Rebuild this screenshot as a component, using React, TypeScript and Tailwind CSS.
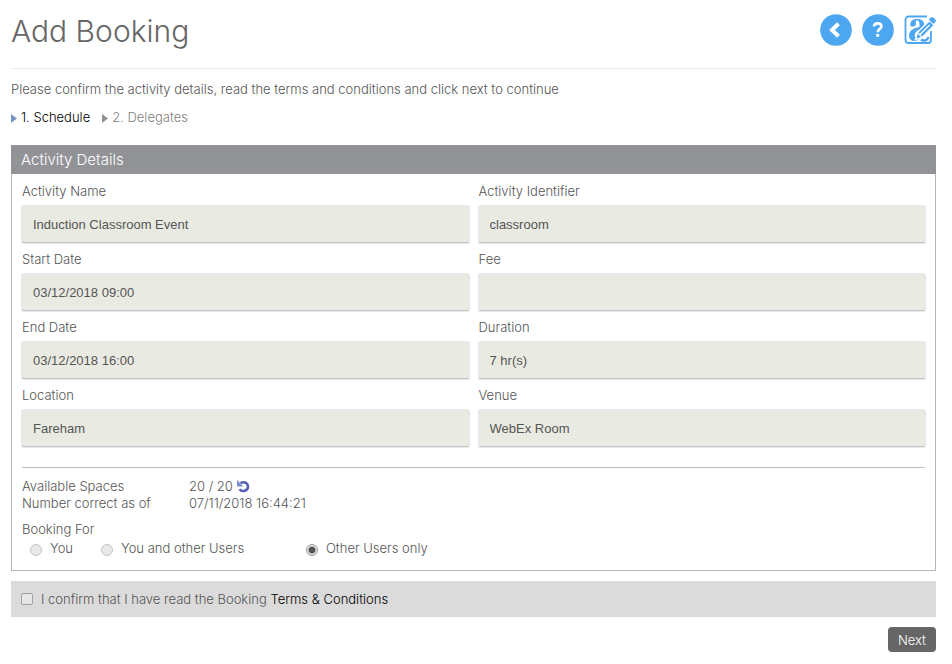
import { useState } from 'react'

type Field = { id: string; label: string; value: string }

const fields: Field[] = [
  { id: 'activity_name', label: 'Activity Name', value: 'Induction Classroom Event' },
  { id: 'activity_identifier', label: 'Activity Identifier', value: 'classroom' },
  { id: 'start_date', label: 'Start Date', value: '03/12/2018 09:00' },
  { id: 'fee', label: 'Fee', value: '' },
  { id: 'end_date', label: 'End Date', value: '03/12/2018 16:00' },
  { id: 'duration', label: 'Duration', value: '7 hr(s)' },
  { id: 'location', label: 'Location', value: 'Fareham' },
  { id: 'venue', label: 'Venue', value: 'WebEx Room' },
]

const bookingOptions = [
  { id: 'you', label: 'You', disabled: true },
  { id: 'you_and_others', label: 'You and other Users', disabled: true },
  { id: 'others_only', label: 'Other Users only', disabled: false },
]

function BackIcon() {
  return (
    <svg width="32" height="32" viewBox="0 0 32 32">
      <circle cx="16" cy="16" r="15.8" fill="#4da6f0" />
      <path d="M18.500 9.800 12 16l6.500 6.200" fill="none" stroke="#fff" strokeWidth="4" />
    </svg>
  )
}

function HelpIcon() {
  return (
    <svg width="32" height="32" viewBox="0 0 32 32">
      <circle cx="16" cy="16" r="15.8" fill="#4da6f0" />
      <path
        d="M12 12.300c.2-2 1.600-3 3.700-3 2.200 0 3.700 1 3.700 3 0 2.700-3.700 2.900-3.700 6"
        fill="none"
        stroke="#fff"
        strokeWidth="2.700"
      />
      <rect x="14.200" y="20" width="3" height="2.800" fill="#fff" />
    </svg>
  )
}

function EditIcon() {
  return (
    <svg width="32" height="32" viewBox="0 0 32 32" fill="none">
      <path
        d="M23 2.500H4.500A3 3 0 0 0 1.500 5.500v20.500a3 3 0 0 0 3 3h19.500a3 3 0 0 0 3-3V17"
        stroke="#4da6f0"
        strokeWidth="1.800"
      />
      <path d="M6.500 12C5.500 7.500 8.500 5 13 5c4.500 0 7 2 7 5v9h-4.500v-9c0-2.500-1-3.500-2.500-3.500-1 0-1.500.4-1.300 1.300.8 2.500-.2 4.700-2.400 4.700-1.200 0-2.300 0-2.800-.5Z" fill="#4da6f0" />
      <path d="M16 13c-7 1-11 4-11 8.500C5 25 7.500 27 10.500 27c2 0 4-1 5.500-3l-5-1c-1-3 1-6.500 5-7.500V13Z" fill="#4da6f0" />
      <path d="M17 25.500c2 1.800 6.500 1.500 7.500-2.500" stroke="#4da6f0" strokeWidth="2.500" />
      <path d="m11.500 25.500 1.800-7L25.500 6.500l4.800 4.800L18.500 23.300l-7 2.200Z" fill="#4da6f0" stroke="#fff" strokeWidth="1.400" />
      <path d="m24.800 5.500 2-2c.8-.8 1.700-.8 2.500 0l2 2c.8.8.8 1.700 0 2.500l-2 2-4.500-4.500Z" fill="#4da6f0" />
      <path d="m16 20.500 9.500-9.500M13.800 18.800l4.200 4.200" stroke="#fff" strokeWidth="1.200" />
    </svg>
  )
}

function RefreshIcon() {
  return (
    <svg width="13" height="13" viewBox="0 0 13 13">
      <path d="M3.500 3.200C8 .8 11 3.500 11 6.500c0 4.500-6 6-8.500 2.800" fill="none" stroke="#5560b5" strokeWidth="2.600" />
      <path d="M0 0v6.500h6.500L0 0Z" fill="#7f8dd6" />
    </svg>
  )
}

function StepArrow({ className }: { className: string }) {
  return (
    <svg width="6" height="9" viewBox="0 0 6 9" className={className}>
      <path d="M0 0v9l6-4.500L0 0Z" fill="currentColor" />
    </svg>
  )
}

export default function App() {
  const [bookingFor, setBookingFor] = useState('others_only')
  const [confirmed, setConfirmed] = useState(false)

  return (
    <main className="bg-white pl-[11px] pr-4 font-['Century_Gothic','Inter',sans-serif] text-[13px] font-light leading-5 text-[#555]">
      <header className="flex h-[69px] items-start justify-between border-b border-[#e8e8e8] pt-3.5">
        <h1 className="text-[30px] leading-[34px] text-[#666]">Add Booking</h1>
        <div className="flex gap-2.5">
          <button type="button" aria-label="Back">
            <BackIcon />
          </button>
          <button type="button" aria-label="Help">
            <HelpIcon />
          </button>
          <button type="button" aria-label="Edit">
            <EditIcon />
          </button>
        </div>
      </header>

      <p className="mt-2.5">
        Please confirm the activity details, read the terms and conditions and click next to continue
      </p>

      <ol className="mt-2 flex gap-3">
        <li className="flex items-center gap-1 text-black">
          <StepArrow className="mt-0.5 text-[#7595c5]" />
          1. Schedule
        </li>
        <li className="flex items-center gap-1 text-[#808080]">
          <StepArrow className="mt-0.5 text-[#909090]" />
          2. Delegates
        </li>
      </ol>

      <section className="mt-[18px]">
        <h2 className="bg-[#929397] px-2.5 text-[15px] leading-[29px] text-white">Activity Details</h2>
        <div className="border border-t-0 border-[#b5b5b5] px-[9px] pb-3 pt-[7px]">
          <div className="grid grid-cols-2 gap-x-2 gap-y-1.5">
            {fields.map((field) => (
              <div key={field.id}>
                <label htmlFor={field.id} className="block pl-px">
                  {field.label}
                </label>
                <input
                  id={field.id}
                  type="text"
                  readOnly
                  defaultValue={field.value}
                  className="mt-1 block h-[38px] w-full rounded-[3px] border border-[#e8e8ec] border-b-[#c4c5c8] bg-[#e9eae2] px-[11px] font-['Liberation_Sans',Arial,sans-serif] text-[13px] font-normal text-[#555] shadow-[0_1px_1px_rgba(0,0,0,0.1)] focus:outline-none"
                />
              </div>
            ))}
          </div>

          <div className="mx-px mt-5 border-t border-[#b9bec6] pt-2.5">
            <dl className="grid grid-cols-[167px_1fr] leading-[17px]">
              <dt>Available Spaces</dt>
              <dd className="flex items-center gap-1">
                20 / 20
                <button type="button" aria-label="Refresh">
                  <RefreshIcon />
                </button>
              </dd>
              <dt>Number correct as of</dt>
              <dd>07/11/2018 16:44:21</dd>
            </dl>

            <fieldset className="mt-2 leading-[19px]">
              <legend>Booking For</legend>
              <div className="grid grid-cols-[71px_205px_auto] pl-2">
                {bookingOptions.map((option) => (
                  <label key={option.id} className="flex items-center gap-2">
                    <input
                      type="radio"
                      name="booking_for"
                      value={option.id}
                      disabled={option.disabled}
                      checked={bookingFor === option.id}
                      onChange={() => setBookingFor(option.id)}
                      className="mt-0.5 h-3 w-3 shrink-0 appearance-none rounded-full border border-[#999] bg-[#e8e8e8] checked:bg-[radial-gradient(circle,#555_0,#555_3px,#e8e8e8_4px)] disabled:border-[#c4c4c4]"
                    />
                    {option.label}
                  </label>
                ))}
              </div>
            </fieldset>
          </div>
        </div>
      </section>

      <div className="mt-2.5 flex items-center gap-2 bg-[#dbdbdb] px-2.5 py-2">
        <input
          id="confirm_terms"
          type="checkbox"
          checked={confirmed}
          onChange={(e) => setConfirmed(e.target.checked)}
          className="h-3 w-3 appearance-none rounded-[2px] border border-[#a0a0a0] bg-[#e6e6e6] checked:bg-[#555]"
        />
        <p>
          <label htmlFor="confirm_terms">I confirm that I have read the Booking</label>{' '}
          <a href="#terms" className="text-black">
            Terms &amp; Conditions
          </a>
        </p>
      </div>

      <div className="mt-2.5 flex justify-end">
        <button type="button" className="h-[25px] rounded bg-[#666] px-2.5 text-white">
          Next
        </button>
      </div>
    </main>
  )
}
